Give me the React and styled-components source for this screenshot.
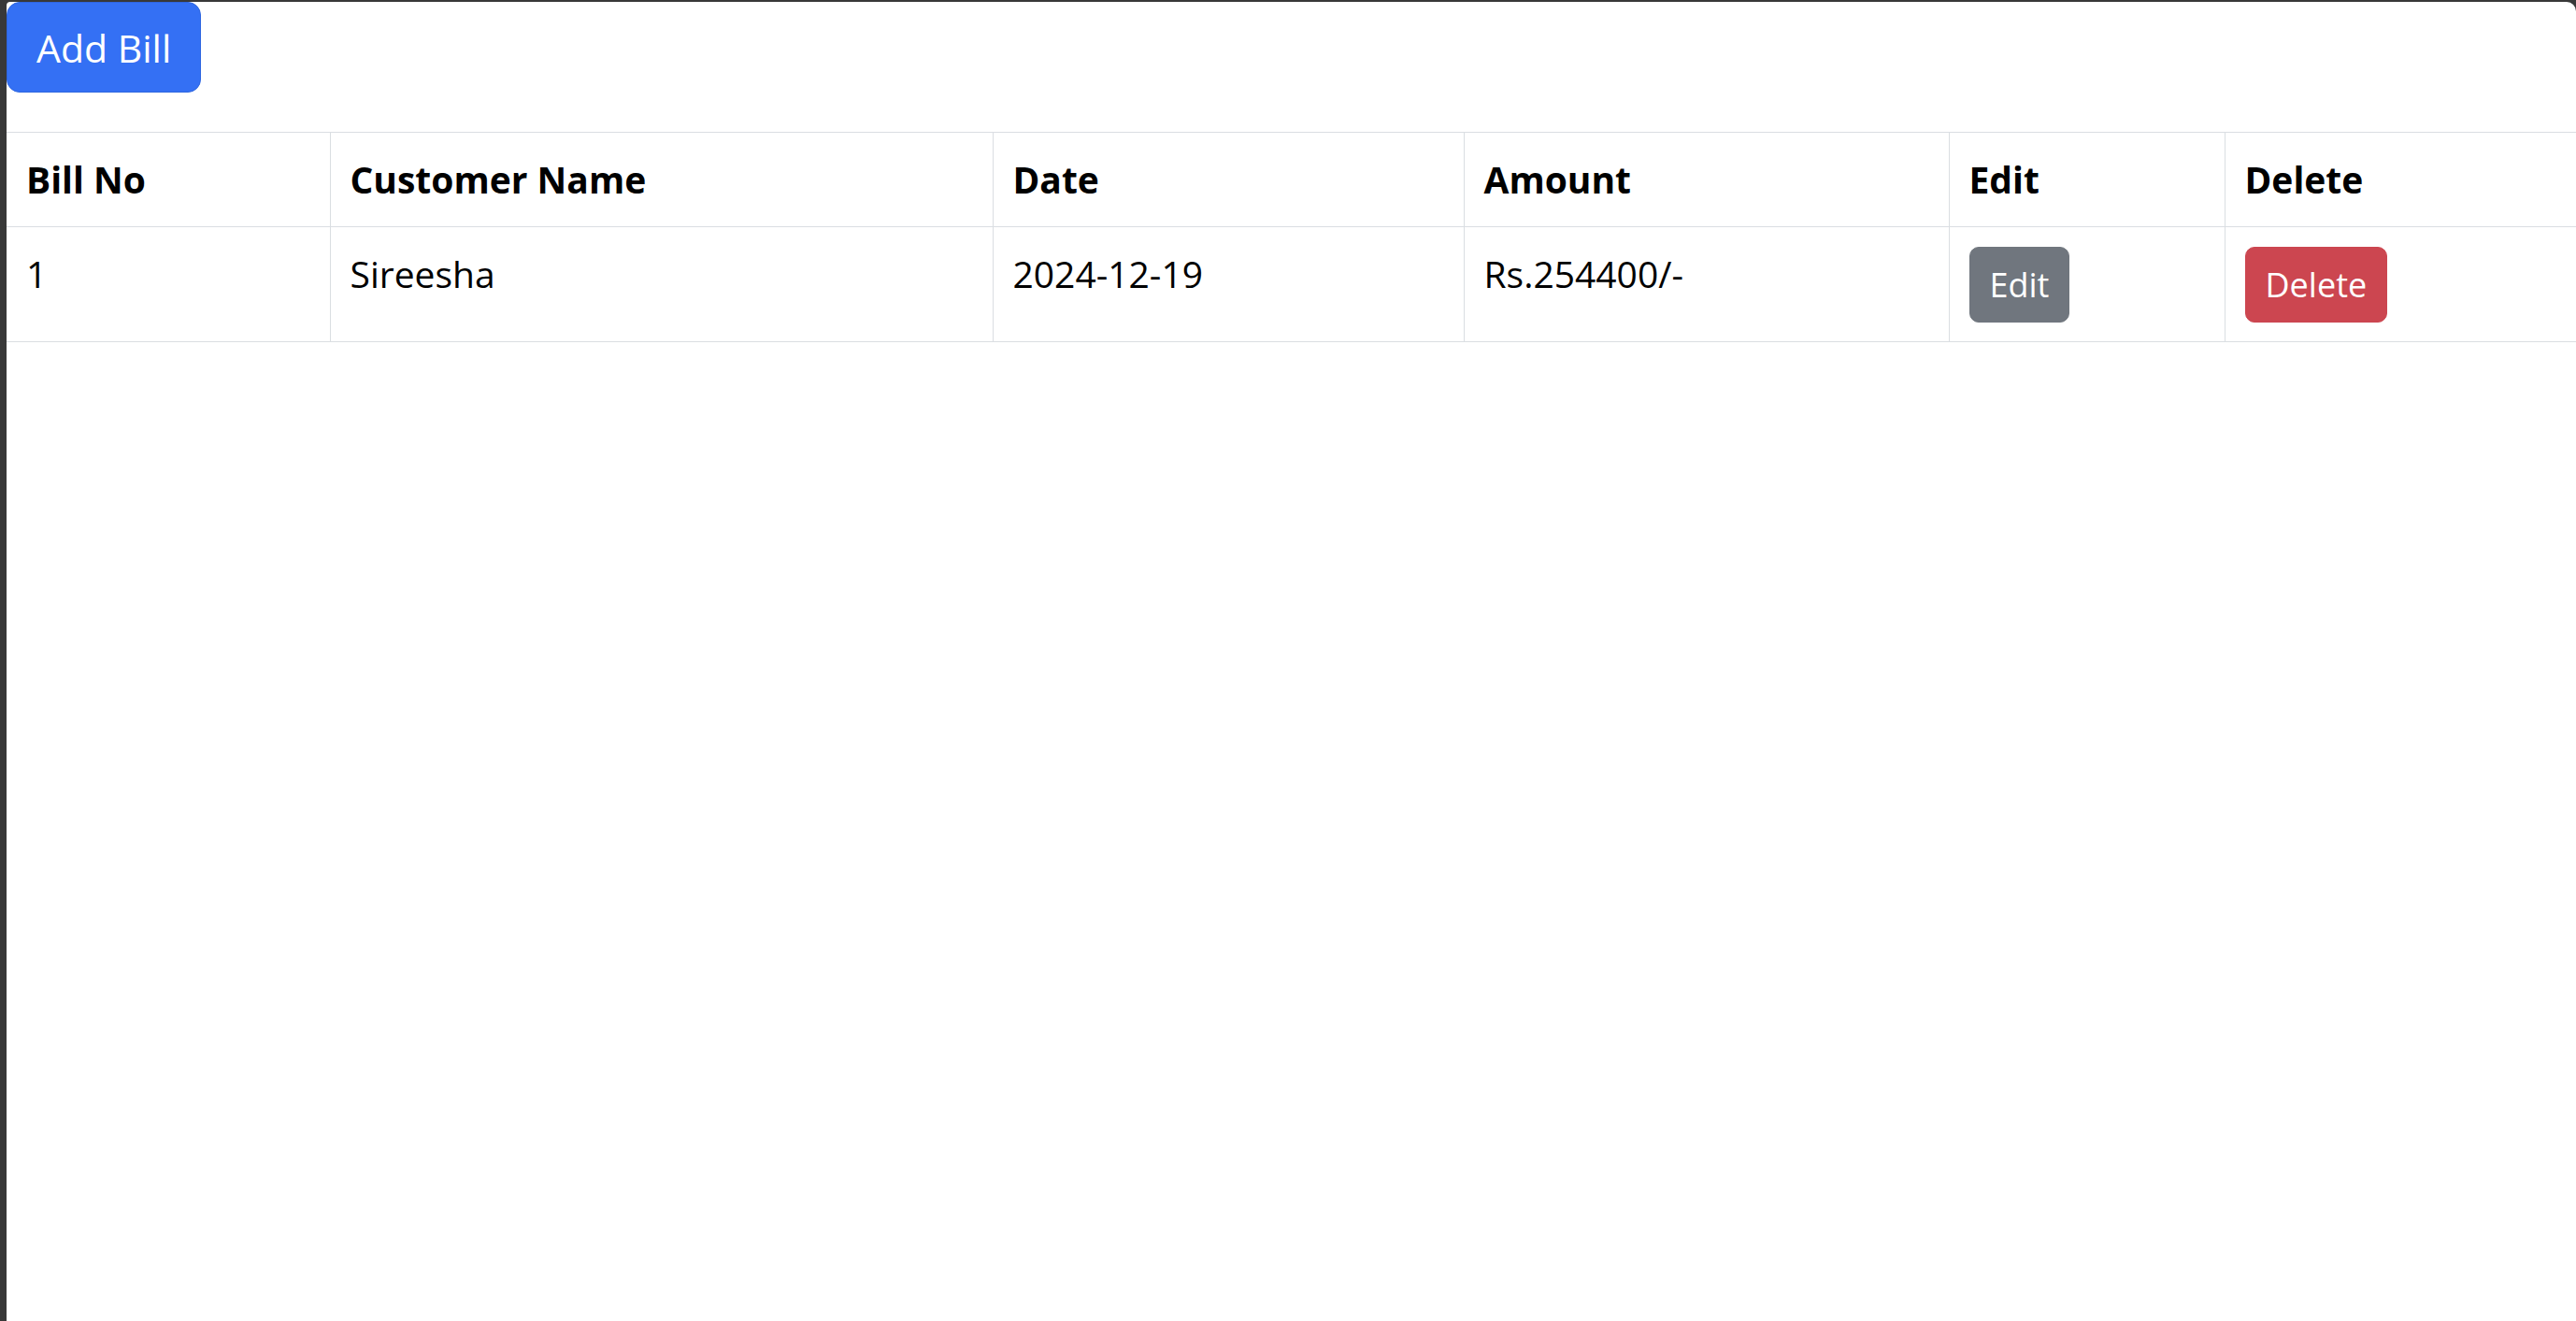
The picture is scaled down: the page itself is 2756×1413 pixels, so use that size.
import React from 'react';
import styled, { createGlobalStyle } from 'styled-components';

const GlobalStyle = createGlobalStyle`
  html, body {
    margin: 0;
    padding: 0;
    background: #383838;
  }
  body {
    font-family: 'Open Sans', 'Noto Sans', sans-serif;
    color: #000;
  }
`;

const Frame = styled.div`
  min-height: 100vh;
  box-sizing: border-box;
  padding: 2px 0 0 7px;
  display: flex;
`;

const Page = styled.div`
  flex: 1;
  background: #fff;
  border-top-right-radius: 10px;
  border-top-left-radius: 4px;
  min-height: calc(100vh - 2px);
`;

const Button = styled.button`
  font-family: inherit;
  color: #fff;
  border: 1px solid ${p => p.$border};
  background: ${p => p.$bg};
  cursor: pointer;
  box-sizing: border-box;
  display: inline-flex;
  align-items: center;
  justify-content: center;
  ${p =>
    p.$large
      ? `
    height: 97px;
    padding: 0 31px;
    font-size: 41px;
    border-radius: 14px;
  `
      : `
    height: 81px;
    padding: 0 21px;
    font-size: 36px;
    border-radius: 10px;
  `}
`;

const Toolbar = styled.div`
  display: flex;
  margin-bottom: 42px;
`;

const Table = styled.table`
  width: 100%;
  table-layout: fixed;
  border-collapse: collapse;
`;

const HeadCell = styled.th`
  border: 1px solid #dadee2;
  border-left: ${p => (p.$first ? 'none' : '1px solid #dadee2')};
  border-right: ${p => (p.$last ? 'none' : '1px solid #dadee2')};
  text-align: left;
  font-weight: 700;
  font-size: 39px;
  line-height: 60px;
  padding: 20px 21px;
  vertical-align: middle;
`;

const Cell = styled.td`
  border: 1px solid #dadee2;
  border-left: ${p => (p.$first ? 'none' : '1px solid #dadee2')};
  border-right: ${p => (p.$last ? 'none' : '1px solid #dadee2')};
  font-size: 39px;
  line-height: 58px;
  padding: 21px 21px 20px;
  vertical-align: top;
`;

const widths = [346, 709, 504, 519, 295, 376];

const bills = [
  { no: 1, name: 'Sireesha', date: '2024-12-19', amount: 254400 },
];

export default function App() {
  return (
    <>
      <GlobalStyle />
      <Frame>
        <Page>
          <Toolbar>
            <Button $large $bg="#3470f4" $border="#2e66e0">
              Add Bill
            </Button>
          </Toolbar>
          <Table>
            <colgroup>
              {widths.map((w, i) => (
                <col key={i} style={{ width: w }} />
              ))}
            </colgroup>
            <thead>
              <tr>
                <HeadCell $first>Bill No</HeadCell>
                <HeadCell>Customer Name</HeadCell>
                <HeadCell>Date</HeadCell>
                <HeadCell>Amount</HeadCell>
                <HeadCell>Edit</HeadCell>
                <HeadCell $last>Delete</HeadCell>
              </tr>
            </thead>
            <tbody>
              {bills.map(b => (
                <tr key={b.no}>
                  <Cell $first>{b.no}</Cell>
                  <Cell>{b.name}</Cell>
                  <Cell>{b.date}</Cell>
                  <Cell>Rs.{b.amount}/-</Cell>
                  <Cell>
                    <Button $bg="#70767e" $border="#70767e">Edit</Button>
                  </Cell>
                  <Cell $last>
                    <Button $bg="#cc4650" $border="#cc4650">Delete</Button>
                  </Cell>
                </tr>
              ))}
            </tbody>
          </Table>
        </Page>
      </Frame>
    </>
  );
}
